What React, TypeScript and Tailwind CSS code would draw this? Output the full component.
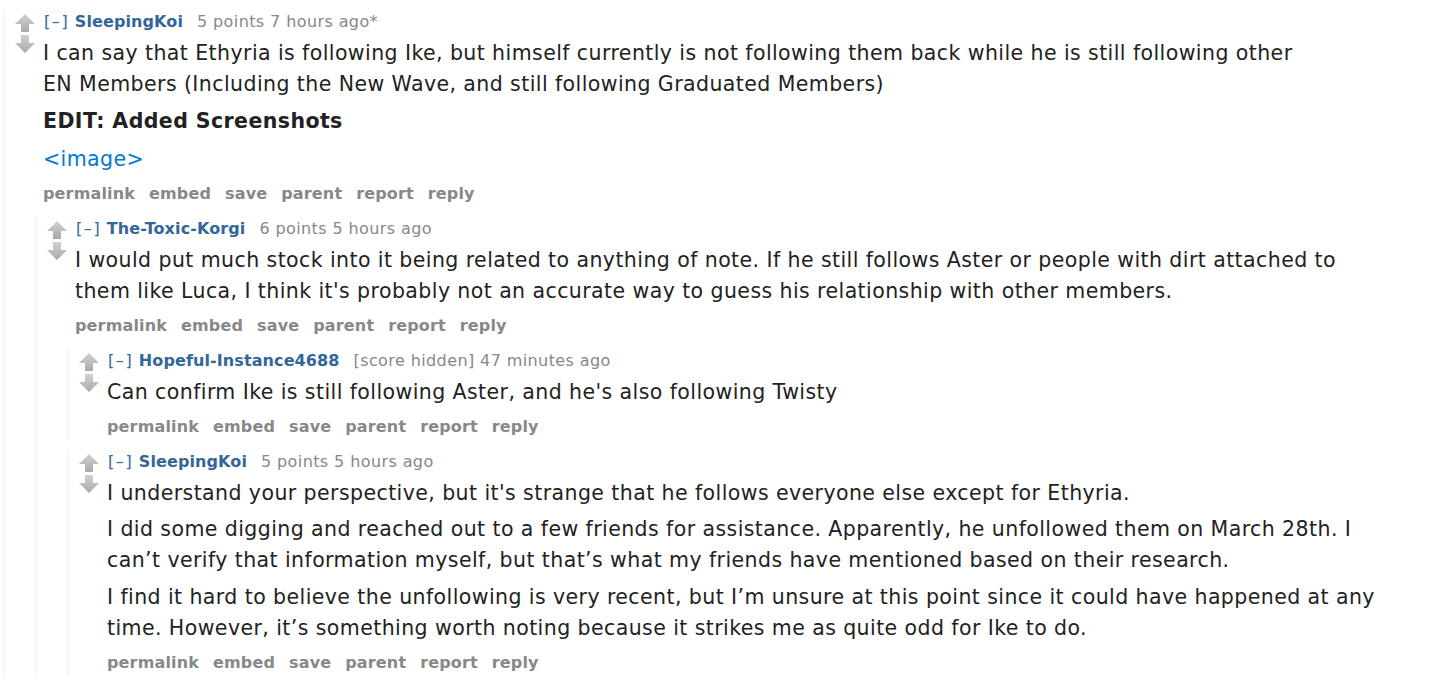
import type { ReactNode } from "react";

type CommentProps = {
  author: string;
  score: string;
  time: string;
  children: ReactNode;
  replies?: ReactNode;
};

function Arrow({ down }: { down?: boolean }) {
  return (
    <svg width="20" height="18" viewBox="0 0 20 18" className="block">
      <defs>
        <linearGradient id={down ? "gd" : "gu"} x1="0" y1="0" x2="0" y2="1">
          <stop offset="0" stopColor="#d2d2d2" />
          <stop offset="1" stopColor="#a9a9a9" />
        </linearGradient>
      </defs>
      <path
        d={
          down
            ? "M6 0 H14 V8 H20 L10 18 L0 8 H6 Z"
            : "M10 0 L20 10 H14 V18 H6 V10 H0 Z"
        }
        fill={`url(#${down ? "gd" : "gu"})`}
      />
    </svg>
  );
}

function Comment({ author, score, time, children, replies }: CommentProps) {
  return (
    <div className="border-l border-dotted border-[#ddddff] pb-px">
      <div className="flex">
        <div className="flex w-[32px] shrink-0 flex-col items-end gap-[3px] pr-[1px] pt-[4px]">
          <Arrow />
          <Arrow down />
        </div>
        <div className="ml-[7px] min-w-0 flex-1">
          <p className="text-[16px] leading-[24px] tracking-[0.4px] text-[#888888]">
            <span className="ml-[1px] tracking-[1.6px] text-[#369]">[–]</span>{" "}
            <span className="font-bold tracking-[0.1px] text-[#369]">{author}</span>
            <span className="ml-[14px]">{score}</span> {time}
          </p>
          <div className="mt-[4px] max-w-[1275px] text-[20.5px] leading-[31px] tracking-[0.42px] text-[#222222]">
            {children}
          </div>
          <ul className="mt-[8px] flex gap-[14px] text-[16px] font-bold leading-[22px] tracking-[0.15px] text-[#888888]">
            <li>permalink</li>
            <li>embed</li>
            <li>save</li>
            <li>parent</li>
            <li>report</li>
            <li>reply</li>
          </ul>
        </div>
      </div>
      {replies && <div className="ml-[31px] mt-[12px] flex flex-col gap-[11px]">{replies}</div>}
    </div>
  );
}

export default function App() {
  return (
    <div
      className="min-h-screen bg-white pl-[3px] pt-[10px]"
      style={{ fontFamily: '"DejaVu Sans", Verdana, sans-serif' }}
    >
      <Comment
        author="SleepingKoi"
        score="5 points"
        time="7 hours ago*"
        replies={
          <Comment
            author="The-Toxic-Korgi"
            score="6 points"
            time="5 hours ago"
            replies={
              <>
                <Comment author="Hopeful-Instance4688" score="[score hidden]" time="47 minutes ago">
                  <p>Can confirm Ike is still following Aster, and he's also following Twisty</p>
                </Comment>
                <Comment author="SleepingKoi" score="5 points" time="5 hours ago">
                  <p>
                    I understand your perspective, but it's strange that he follows everyone else except for
                    Ethyria.
                  </p>
                  <p className="mt-[5px]">
                    I did some digging and reached out to a few friends for assistance. Apparently, he
                    unfollowed them on March 28th. I can’t verify that information myself, but that’s what my
                    friends have mentioned based on their research.
                  </p>
                  <p className="mt-[6px]">
                    I find it hard to believe the unfollowing is very recent, but I’m unsure at this point since
                    it could have happened at any time. However, it’s something worth noting because it strikes
                    me as quite odd for Ike to do.
                  </p>
                </Comment>
              </>
            }
          >
            <p>
              I would put much stock into it being related to anything of note. If he still follows Aster or
              people with dirt attached to them like Luca, I think it's probably not an accurate way to guess his
              relationship with other members.
            </p>
          </Comment>
        }
      >
        <p>
          I can say that Ethyria is following Ike, but himself currently is not following them back while he is
          still following other EN Members (Including the New Wave, and still following Graduated Members)
        </p>
        <p className="mt-[6px] font-bold">EDIT: Added Screenshots</p>
        <p className="mt-[7px]">
          <a className="text-[#0079d3]">&lt;image&gt;</a>
        </p>
      </Comment>
    </div>
  );
}
